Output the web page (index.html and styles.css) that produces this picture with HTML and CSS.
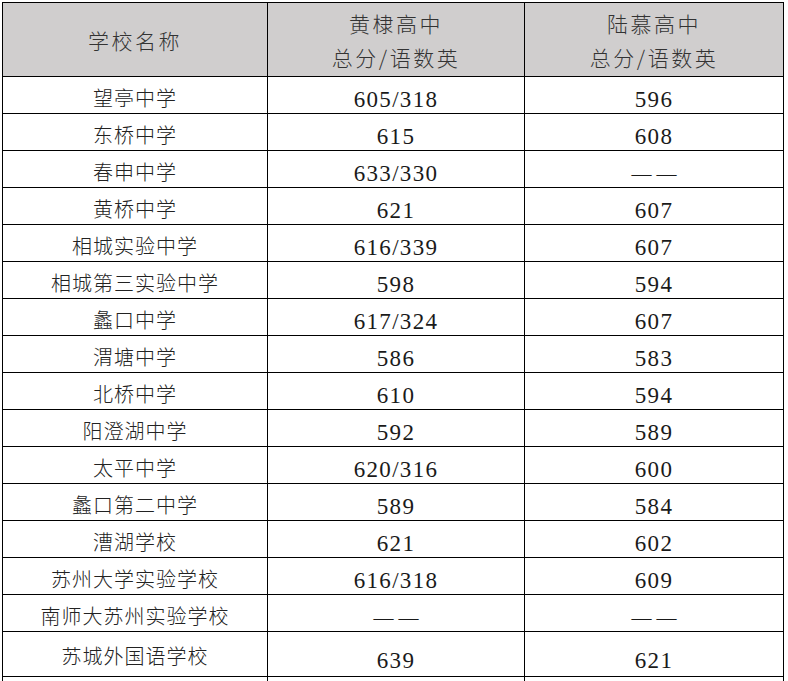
FILE: index.html
```html
<!DOCTYPE html>
<html lang="zh-CN">
<head>
<meta charset="utf-8">
<title>分数线</title>
<link rel="stylesheet" href="styles.css">
</head>
<body>
<table class="score-table">
  <colgroup>
    <col class="c1"><col class="c2"><col class="c3">
  </colgroup>
  <thead>
    <tr>
      <th class="head">学校名称</th>
      <th class="head">黄棣高中<br>总分/语数英</th>
      <th class="head">陆慕高中<br>总分/语数英</th>
    </tr>
  </thead>
  <tbody>
    <tr><td class="name">望亭中学</td><td class="num">605/318</td><td class="num">596</td></tr>
    <tr><td class="name">东桥中学</td><td class="num">615</td><td class="num">608</td></tr>
    <tr><td class="name">春申中学</td><td class="num">633/330</td><td class="num"><span class="dash">——</span></td></tr>
    <tr><td class="name">黄桥中学</td><td class="num">621</td><td class="num">607</td></tr>
    <tr><td class="name">相城实验中学</td><td class="num">616/339</td><td class="num">607</td></tr>
    <tr><td class="name">相城第三实验中学</td><td class="num">598</td><td class="num">594</td></tr>
    <tr><td class="name">蠡口中学</td><td class="num">617/324</td><td class="num">607</td></tr>
    <tr><td class="name">渭塘中学</td><td class="num">586</td><td class="num">583</td></tr>
    <tr><td class="name">北桥中学</td><td class="num">610</td><td class="num">594</td></tr>
    <tr><td class="name">阳澄湖中学</td><td class="num">592</td><td class="num">589</td></tr>
    <tr><td class="name">太平中学</td><td class="num">620/316</td><td class="num">600</td></tr>
    <tr><td class="name">蠡口第二中学</td><td class="num">589</td><td class="num">584</td></tr>
    <tr><td class="name">漕湖学校</td><td class="num">621</td><td class="num">602</td></tr>
    <tr><td class="name">苏州大学实验学校</td><td class="num">616/318</td><td class="num">609</td></tr>
    <tr><td class="name">南师大苏州实验学校</td><td class="num"><span class="dash">——</span></td><td class="num"><span class="dash">——</span></td></tr>
    <tr class="tall"><td class="name">苏城外国语学校</td><td class="num">639</td><td class="num">621</td></tr>
    <tr class="extra"><td></td><td></td><td></td></tr>
  </tbody>
</table>
</body>
</html>
```

FILE: styles.css
```css
html, body {
  margin: 0;
  padding: 0;
  background: #ffffff;
}
body {
  padding: 2px 0 0 2px;
}
.score-table {
  border-collapse: collapse;
  table-layout: fixed;
  width: 781px;
}
.c1 { width: 265px; }
.c2 { width: 257px; }
.c3 { width: 259px; }
.score-table th,
.score-table td {
  border: 1px solid #000;
  padding: 0;
  text-align: center;
  vertical-align: top;
}
.head {
  background: #d0cece;
  height: 73px;
  color: #333;
  font-family: "Noto Sans CJK SC", sans-serif;
  font-weight: 300;
  font-size: 21px;
  letter-spacing: 2.5px;
  line-height: 34px;
  vertical-align: middle !important;
}
tbody tr {
  height: 37px;
}
.name {
  font-family: "Noto Sans CJK SC", sans-serif;
  font-weight: 300;
  font-size: 20px;
  letter-spacing: 1px;
  line-height: 28px;
  padding-top: 7px !important;
  color: #222;
}
.num {
  font-family: "Liberation Serif", "Times New Roman", serif;
  font-size: 23px;
  letter-spacing: 1.3px;
  line-height: 26px;
  padding-top: 10px !important;
  color: #1a1a1a;
}
.dash {
  font-size: 20px;
  letter-spacing: 5px;
  margin-right: -5px;
}
.tall {
  height: 45px;
}
.tall .name {
  padding-top: 10px !important;
}
.tall .num {
  padding-top: 16px !important;
}
.extra {
  height: 10px;
}
```
